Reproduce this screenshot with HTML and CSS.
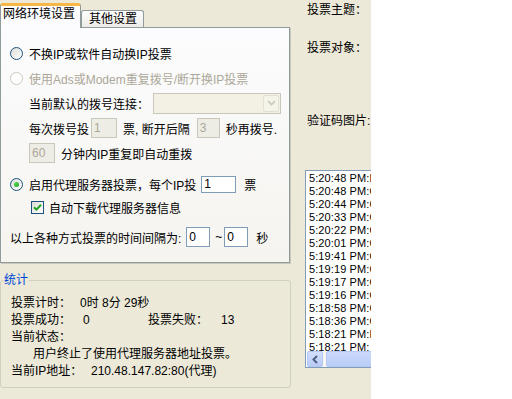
FILE: index.html
```html
<!DOCTYPE html>
<html>
<head>
  <title>投票器</title>
  <link rel="stylesheet" href="styles.css">
</head>
<body>
  <div class="app">
    <div class="left">
      <div class="tabs">
        <div class="tab active">网络环境设置</div>
        <div class="tab">其他设置</div>
      </div>
      <div class="tab-panel">
        <div class="row">
          <span class="radio"></span>
          <span>不换IP或软件自动换IP投票</span>
        </div>
        <div class="row disabled-text">
          <span class="radio disabled"></span>
          <span>使用Ads或Modem重复拨号/断开换IP投票</span>
        </div>
        <div class="row indent">
          <span>当前默认的拨号连接：</span>
          <div class="combo">
            <span class="combo-btn">
              <svg width="9" height="6" viewBox="0 0 9 6"><path d="M1 1 L4.5 4.5 L8 1" fill="none" stroke="#C9C7BA" stroke-width="1.6"/></svg>
            </span>
          </div>
        </div>
        <div class="row indent">
          <span>每次拨号投</span>
          <input class="field field-md dial-votes" value="1" disabled>
          <span class="after-field">票, 断开后隔</span>
          <input class="field field-sm dial-wait" value="3" disabled>
          <span class="after-field">秒再拨号.</span>
        </div>
        <div class="row indent">
          <input class="field field-md" value="60" disabled>
          <span class="after-field">分钟内IP重复即自动重拨</span>
        </div>
        <div class="row gap-l">
          <span class="radio checked"></span>
          <span>启用代理服务器投票，每个IP投</span>
          <input class="field field-lg proxy-votes" value="1">
          <span class="unit">票</span>
        </div>
        <div class="row check-row gap-s">
          <span class="check">
            <svg width="9" height="9" viewBox="0 0 9 9"><path d="M1 4.2 L3.4 6.6 L8 1.8" fill="none" stroke="#21A121" stroke-width="2"/></svg>
          </span>
          <span>自动下载代理服务器信息</span>
        </div>
        <div class="row gap-m">
          <span>以上各种方式投票的时间间隔为:</span>
          <input class="field field-sm interval-from" value="0">
          <span class="tilde">~</span>
          <input class="field field-sm interval-to" value="0">
          <span class="unit">秒</span>
        </div>
      </div>

      <fieldset class="stats">
        <legend>统计</legend>
        <div class="stat">
          <span class="stat-label">投票计时：</span>
          <span>0时 8分 29秒</span>
        </div>
        <div class="stat">
          <span class="stat-label">投票成功：</span>
          <span class="num ok-count">0</span>
          <span class="fail-label">投票失败：</span>
          <span>13</span>
        </div>
        <div class="stat">
          <span>当前状态：</span>
        </div>
        <div class="stat status-msg">
          <span>用户终止了使用代理服务器地址投票。</span>
        </div>
        <div class="stat">
          <span class="stat-label ip-label">当前IP地址：</span>
          <span>210.48.147.82:80(代理)</span>
        </div>
      </fieldset>
    </div>

    <div class="right">
      <div class="caption">投票主题：</div>
      <div class="caption target">投票对象：</div>
      <div class="caption captcha">验证码图片:</div>
      <div class="log-box">
        <div class="log-items">
          <div>5:20:48 PM:F</div>
          <div>5:20:48 PM:C</div>
          <div>5:20:44 PM:C</div>
          <div>5:20:33 PM:C</div>
          <div>5:20:22 PM:C</div>
          <div>5:20:01 PM:C</div>
          <div>5:19:41 PM:C</div>
          <div>5:19:19 PM:C</div>
          <div>5:19:17 PM:C</div>
          <div>5:19:16 PM:C</div>
          <div>5:18:58 PM:C</div>
          <div>5:18:36 PM:C</div>
          <div>5:18:21 PM:F</div>
          <div>5:18:21 PM:</div>
        </div>
        <div class="hscroll">
          <span class="scroll-btn">
            <svg width="8" height="9" viewBox="0 0 8 9"><path d="M6 1 L2.5 4.5 L6 8" fill="none" stroke="#4D6185" stroke-width="2"/></svg>
          </span>
          <span class="scroll-thumb"></span>
        </div>
      </div>
    </div>
  </div>
</body>
</html>
```

FILE: styles.css
```css
body {
  margin: 0;
  background-color: #fff;
  font-family: "Liberation Sans", "Noto Sans CJK SC", sans-serif;
  font-size: 12px;
  color: #000;
}

.app {
  display: flex;
  width: 371px;
  height: 399px;
  background-color: #ece9d8;
  overflow: hidden;
}

.left {
  width: 291px;
  flex-shrink: 0;
}

/* Tabs */
.tabs {
  display: flex;
  align-items: flex-end;
  height: 27px;
}

.tab {
  height: 16px;
  line-height: 16px;
  padding: 0 6px 0 7px;
  border: 1px solid #919b9c;
  border-bottom: none;
  border-radius: 3px 3px 0 0;
  background: linear-gradient(#fff, #ecebe6);
}

.tab.active {
  position: relative;
  z-index: 1;
  height: 19px;
  line-height: 16px;
  padding: 0 5px 3px 2px;
  margin-bottom: -1px;
  border-top: 3px solid #f7b745;
  background: #fcfcfe;
}

.tab-panel {
  width: 290px;
  box-sizing: border-box;
  padding: 15px 0 15px 9px;
  border: 1px solid #919b9c;
  background: linear-gradient(#fcfcfe, #f5f4ef);
  box-shadow: 1px 1px 0 #c9c7ba;
}

.row {
  display: flex;
  align-items: center;
  height: 20px;
  margin-top: 5px;
  white-space: nowrap;
}

.row:first-child {
  margin-top: 0;
}

.row.indent {
  padding-left: 19px;
}

.row.gap-l {
  margin-top: 11px;
}

.row.gap-s {
  margin-top: 3px;
}

.row.gap-m {
  margin-top: 10px;
}

.disabled-text {
  color: #aca899;
}

/* XP radio / checkbox */
.radio {
  display: flex;
  align-items: center;
  justify-content: center;
  width: 13px;
  height: 13px;
  box-sizing: border-box;
  margin-right: 6px;
  border: 1px solid #1c5180;
  border-radius: 50%;
  background: linear-gradient(135deg, #dcdcd7, #fff);
  flex-shrink: 0;
}

.radio.disabled {
  border-color: #cac8bb;
  background: #fff;
}

.radio.checked::after {
  content: "";
  width: 5px;
  height: 5px;
  border-radius: 50%;
  background: radial-gradient(circle at 35% 35%, #55d855, #1a9a1a);
}

.check-row {
  padding-left: 21px;
}

.check {
  display: flex;
  align-items: center;
  justify-content: center;
  width: 13px;
  height: 13px;
  box-sizing: border-box;
  margin-right: 5px;
  border: 1px solid #1c5180;
  background: linear-gradient(135deg, #dcdcd7, #fff);
}

/* Edits and combo */
.field {
  height: 20px;
  box-sizing: border-box;
  padding: 0 2px;
  border: 1px solid #7f9db9;
  background-color: #fff;
  font-family: "Liberation Sans", sans-serif;
  font-size: 12px;
  color: #000;
  outline: none;
}

.field:disabled {
  border-color: #c9c7ba;
  background-color: #eeede5;
  color: #aca899;
}

.field-sm {
  width: 24px;
}

.field-md {
  width: 26px;
}

.field-lg {
  width: 35px;
  height: 17px;
}

.dial-votes {
  margin-left: 2px;
}

.dial-wait {
  width: 23px;
  margin-left: 7px;
}

.after-field {
  margin-left: 6px;
}

.proxy-votes {
  margin-left: 5px;
}

.unit {
  margin-left: 8px;
}

.interval-from {
  margin-left: 5px;
}

.tilde {
  margin: 0 2px 0 5px;
}

.combo {
  display: flex;
  justify-content: flex-end;
  align-items: center;
  width: 128px;
  height: 21px;
  box-sizing: border-box;
  margin-left: 4px;
  padding-right: 1px;
  border: 1px solid #c9c7ba;
  background-color: #f3f1e4;
}

.combo-btn {
  display: flex;
  align-items: center;
  justify-content: center;
  width: 16px;
  height: 17px;
  box-sizing: border-box;
  border: 1px solid #e3e1d6;
  border-radius: 2px;
  background-color: #f5f4ea;
}

/* Statistics group */
.stats {
  width: 291px;
  box-sizing: border-box;
  margin: 10px 0 0;
  padding: 8px 8px 7px 10px;
  border: 1px solid #d0d0bf;
  border-radius: 3px;
}

.stats legend {
  margin-left: -8px;
  padding: 0 1px;
  line-height: 14px;
  color: #0046d5;
}

.stat {
  display: flex;
  height: 17px;
  line-height: 17px;
  white-space: nowrap;
}

.stat-label {
  width: 69px;
}

.num {
  width: 65px;
  padding-left: 3px;
}

.fail-label {
  width: 73px;
}

.status-msg {
  padding-left: 22px;
}

.ip-label {
  width: 80px;
}

/* Right side */
.right {
  flex: 1;
  padding-left: 16px;
  overflow: hidden;
}

.caption {
  line-height: 20px;
  white-space: nowrap;
}

.caption.target {
  margin-top: 18px;
}

.caption.captcha {
  margin-top: 53px;
}

.log-box {
  display: flex;
  flex-direction: column;
  width: 200px;
  height: 198px;
  box-sizing: border-box;
  margin: 39px 0 0 -2px;
  border: 1px solid #7f9db9;
  background-color: #fff;
}

.log-items {
  flex: 1;
  overflow: hidden;
  padding: 1px 0 0 3px;
  font-family: "Liberation Sans", sans-serif;
  font-size: 11px;
  line-height: 13px;
  letter-spacing: 0.1px;
  white-space: nowrap;
}

.hscroll {
  display: flex;
  height: 16px;
  margin-left: 1px;
  background-color: #f7f6f1;
}

.scroll-btn {
  display: flex;
  align-items: center;
  justify-content: center;
  width: 16px;
  box-sizing: border-box;
  border: 1px solid #b4c8f6;
  border-radius: 2px;
  background: linear-gradient(#d2defc, #b9cbf6);
}

.scroll-thumb {
  flex: 1;
  margin-left: 3px;
  border: 1px solid #b4c8f6;
  border-radius: 2px;
  background: linear-gradient(#cbd9fb, #bacdf7);
}
```
